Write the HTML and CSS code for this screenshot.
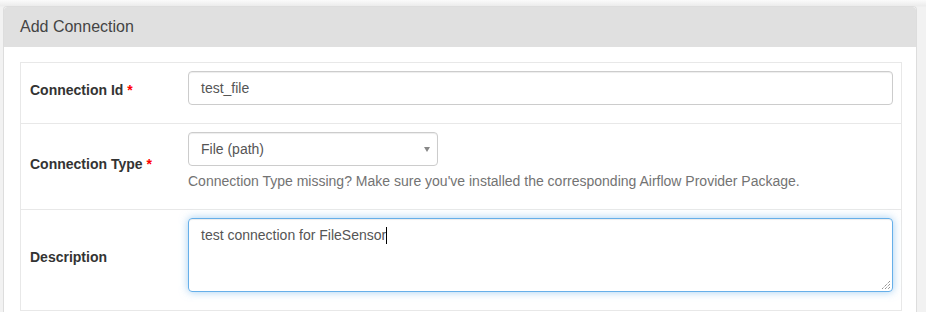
FILE: index.html
```html
<!DOCTYPE html>
<html lang="en">
<head>
  <meta charset="UTF-8">
  <title>Add Connection</title>
  <link rel="stylesheet" href="styles.css">
</head>
<body>
  <!-- Panel tạo kết nối -->
  <div class="panel">
    <div class="panel-heading">Add Connection</div>
    <div class="panel-body">
      <table class="form-table">
        <tr>
          <td class="label-cell"><label>Connection Id</label> <span class="req">*</span></td>
          <td class="field-cell">
            <div class="field">
              <div class="form-control">test_file</div>
            </div>
          </td>
        </tr>
        <tr>
          <td class="label-cell"><label>Connection Type</label> <span class="req">*</span></td>
          <td class="field-cell">
            <div class="field">
              <div class="form-control select">File (path)<span class="arrow"></span></div>
              <p class="help-block">Connection Type missing? Make sure you've installed the corresponding Airflow Provider Package.</p>
            </div>
          </td>
        </tr>
        <tr>
          <td class="label-cell"><label>Description</label></td>
          <td class="field-cell">
            <div class="field">
              <div class="form-control textarea focus">test connection for FileSensor<span class="caret"></span>
                <svg class="grip" width="9" height="9" viewBox="0 0 9 9">
                  <path d="M9 1 L1 9 M9 4 L4 9 M9 7 L7 9" stroke="#666" stroke-width="1" stroke-dasharray="1 1"/>
                </svg>
              </div>
            </div>
          </td>
        </tr>
      </table>
    </div>
  </div>
</body>
</html>
```

FILE: styles.css
```css
html {
  overflow: hidden;
}

body {
  margin: 0;
  padding: 6px 9px 0 3px;
  font-family: "Liberation Sans", Arial, sans-serif;
  font-size: 14px;
  line-height: 20px;
  color: #333;
  background: linear-gradient(#fbfbfb, #ececec 6px, #f2f2f2 7px);
  height: 312px;
  box-sizing: border-box;
  overflow: hidden;
}

.panel {
  background: #fff;
  border: 1px solid #ddd;
  border-bottom: 0;
  border-radius: 4px 4px 0 0;
  height: 306px;
  overflow: hidden;
}

.panel-heading {
  background: #e0e0e0;
  padding: 10px 15px 10px 16px;
  font-size: 16px;
  line-height: 20px;
  color: #444;
  border-radius: 3px 3px 0 0;
}

.panel-body {
  padding: 15px 14px 15px 16px;
}

.form-table {
  width: 100%;
  border-collapse: collapse;
  border: 1px solid #e8e8e8;
}

.form-table td {
  border-top: 1px solid #e8e8e8;
  padding: 8px 8px 8px 9px;
  vertical-align: middle;
}

.form-table .label-cell {
  width: 141px;
  font-weight: bold;
  padding-bottom: 14px;
}

.req {
  color: red;
}

.field {
  padding-bottom: 10px;
}

.form-control {
  height: 34px;
  box-sizing: border-box;
  padding: 6px 12px;
  border: 1px solid #ccc;
  border-radius: 4px;
  color: #555;
  box-shadow: inset 0 1px 1px rgba(0, 0, 0, .075);
}

.select {
  width: 250px;
  position: relative;
}

.arrow {
  position: absolute;
  right: 7px;
  top: 14px;
  border-left: 3.5px solid transparent;
  border-right: 3.5px solid transparent;
  border-top: 5px solid #888;
}

.help-block {
  margin: 5px 0 0;
  color: #737373;
}

.textarea {
  height: 74px;
  position: relative;
}

.focus {
  border-color: #66afe9;
  box-shadow: inset 0 1px 1px rgba(0, 0, 0, .075), 0 0 8px rgba(102, 175, 233, .6);
}

.caret {
  display: inline-block;
  width: 1px;
  height: 17px;
  background: #000;
  vertical-align: -4px;
}

.grip {
  position: absolute;
  right: 2px;
  bottom: 2px;
}
```
